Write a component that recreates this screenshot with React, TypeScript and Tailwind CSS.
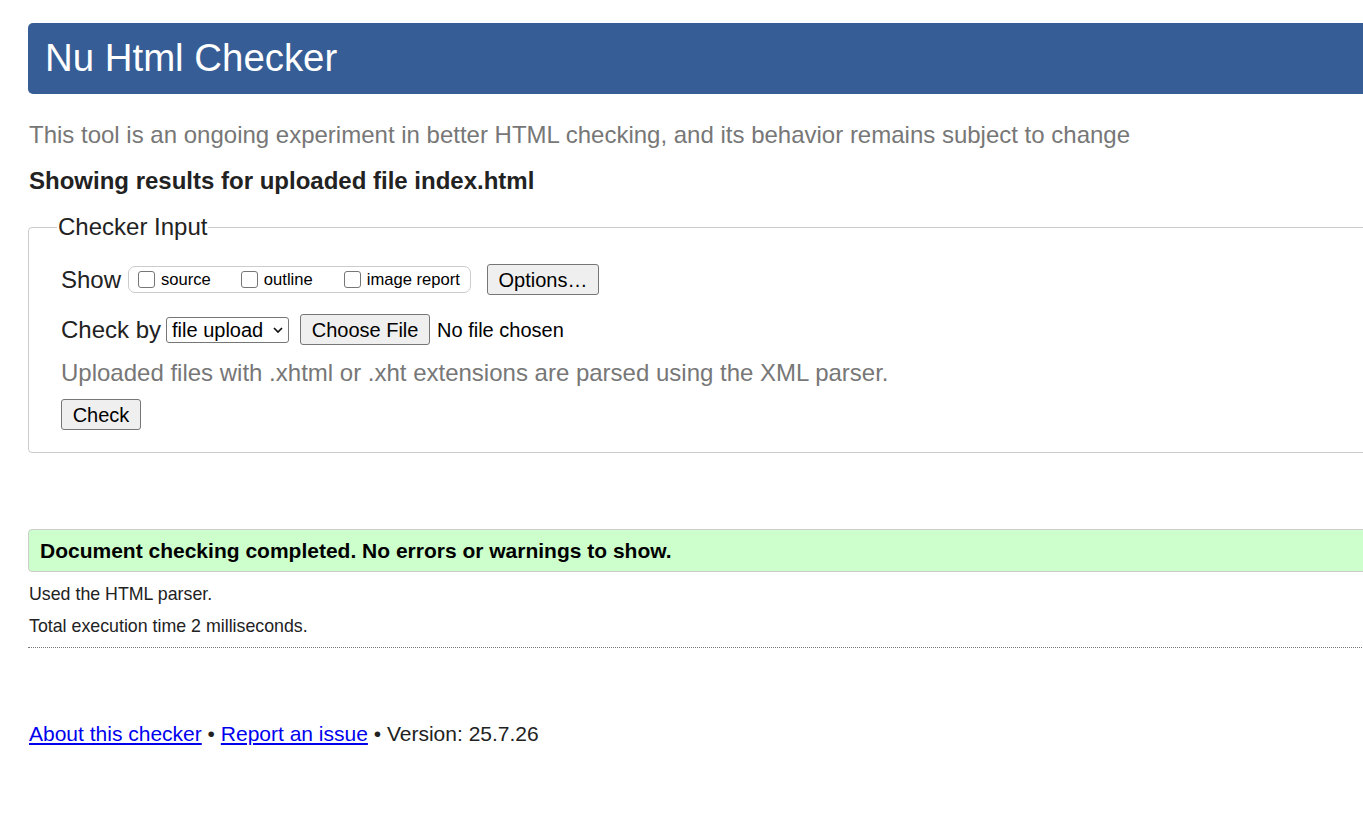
export default function App() {
  return (
    <div className="w-full overflow-hidden bg-white font-['Liberation_Sans',Arial,sans-serif] text-[#222] pb-[60px]">
      <div className="w-[1420px] ml-[28px] pt-[23px]">
        <header className="h-[71px] rounded-[5px] bg-[#365d95] pl-[17px] flex items-center">
          <h1 className="text-[38.4px] text-white leading-none">Nu Html Checker</h1>
        </header>

        <p className="mt-[29px] ml-px text-[24px] leading-none text-[#777]">
          This tool is an ongoing experiment in better HTML checking, and its behavior remains subject to change
        </p>
        <p className="mt-[22px] ml-px text-[24px] leading-none font-bold">
          Showing results for uploaded file index.html
        </p>

        <fieldset className="mt-[22px] border border-[#ccc] rounded-[4px] pl-[32px] pb-[22px]">
          <legend className="ml-[-4px] px-[1px] text-[24px] leading-none">Checker Input</legend>

          <div className="mt-[25px] flex items-center h-[31px]">
            <span className="text-[24px] leading-none mr-[7px]">Show</span>
            <div className="flex items-center h-[27px] border border-[#ccc] rounded-[7px] pl-[9px] pr-[10px]">
              <Box label="source" />
              <span className="w-[30px]" />
              <Box label="outline" />
              <span className="w-[31px]" />
              <Box label="image report" />
            </div>
            <button className="ml-[16px] h-[31px] w-[112px] bg-[#efefef] border border-[#767676] rounded-[3px] text-[20px] leading-none text-black">
              Options…
            </button>
          </div>

          <div className="mt-[19px] flex items-center h-[31px]">
            <span className="text-[24px] leading-none mr-[5px]">Check by</span>
            <div className="flex items-center h-[26px] w-[123px] border border-[#767676] rounded-[3px] pl-[5px] pr-[5px] text-[20px] leading-none text-black">
              <span className="flex-1">file upload</span>
              <svg width="10" height="6" viewBox="0 0 10 6" fill="none" stroke="#111" strokeWidth="1.7">
                <polyline points="1,1 5,5 9,1" />
              </svg>
            </div>
            <button className="ml-[11px] h-[31px] w-[130px] bg-[#efefef] border border-[#767676] rounded-[3px] text-[20px] leading-none text-black">
              Choose File
            </button>
            <span className="ml-[7px] text-[20px] leading-none text-black">No file chosen</span>
          </div>

          <p className="mt-[16px] text-[24px] leading-none text-[#777]">
            Uploaded files with .xhtml or .xht extensions are parsed using the XML parser.
          </p>

          <button className="mt-[14px] h-[31px] w-[80px] bg-[#efefef] border border-[#767676] rounded-[3px] text-[20px] leading-none text-black">
            Check
          </button>
        </fieldset>

        <div className="mt-[76px] h-[43px] flex items-center bg-[#ccffcc] border border-[#ccc] rounded-[4px] pl-[11px]">
          <p className="text-[21px] leading-none font-bold text-black">
            Document checking completed. No errors or warnings to show.
          </p>
        </div>

        <p className="mt-[14px] ml-px text-[17.8px] leading-none">Used the HTML parser.</p>
        <p className="mt-[14px] ml-px text-[17.8px] leading-none">Total execution time 2 milliseconds.</p>
        <div className="mt-[11px] border-t border-dotted border-[#777]" />

        <p className="mt-[75px] ml-px text-[21px] leading-none">
          <a href="#" className="text-[#0000ee] underline">About this checker</a>
          {" • "}
          <a href="#" className="text-[#0000ee] underline">Report an issue</a>
          {" • Version: 25.7.26"}
        </p>
      </div>
    </div>
  );
}

function Box({ label }: { label: string }) {
  return (
    <label className="flex items-end">
      <span className="w-[17px] h-[17px] border border-[#767676] rounded-[3px] bg-white mb-[1px]" />
      <span className="ml-[6px] text-[16.6px] leading-none text-black">{label}</span>
    </label>
  );
}
